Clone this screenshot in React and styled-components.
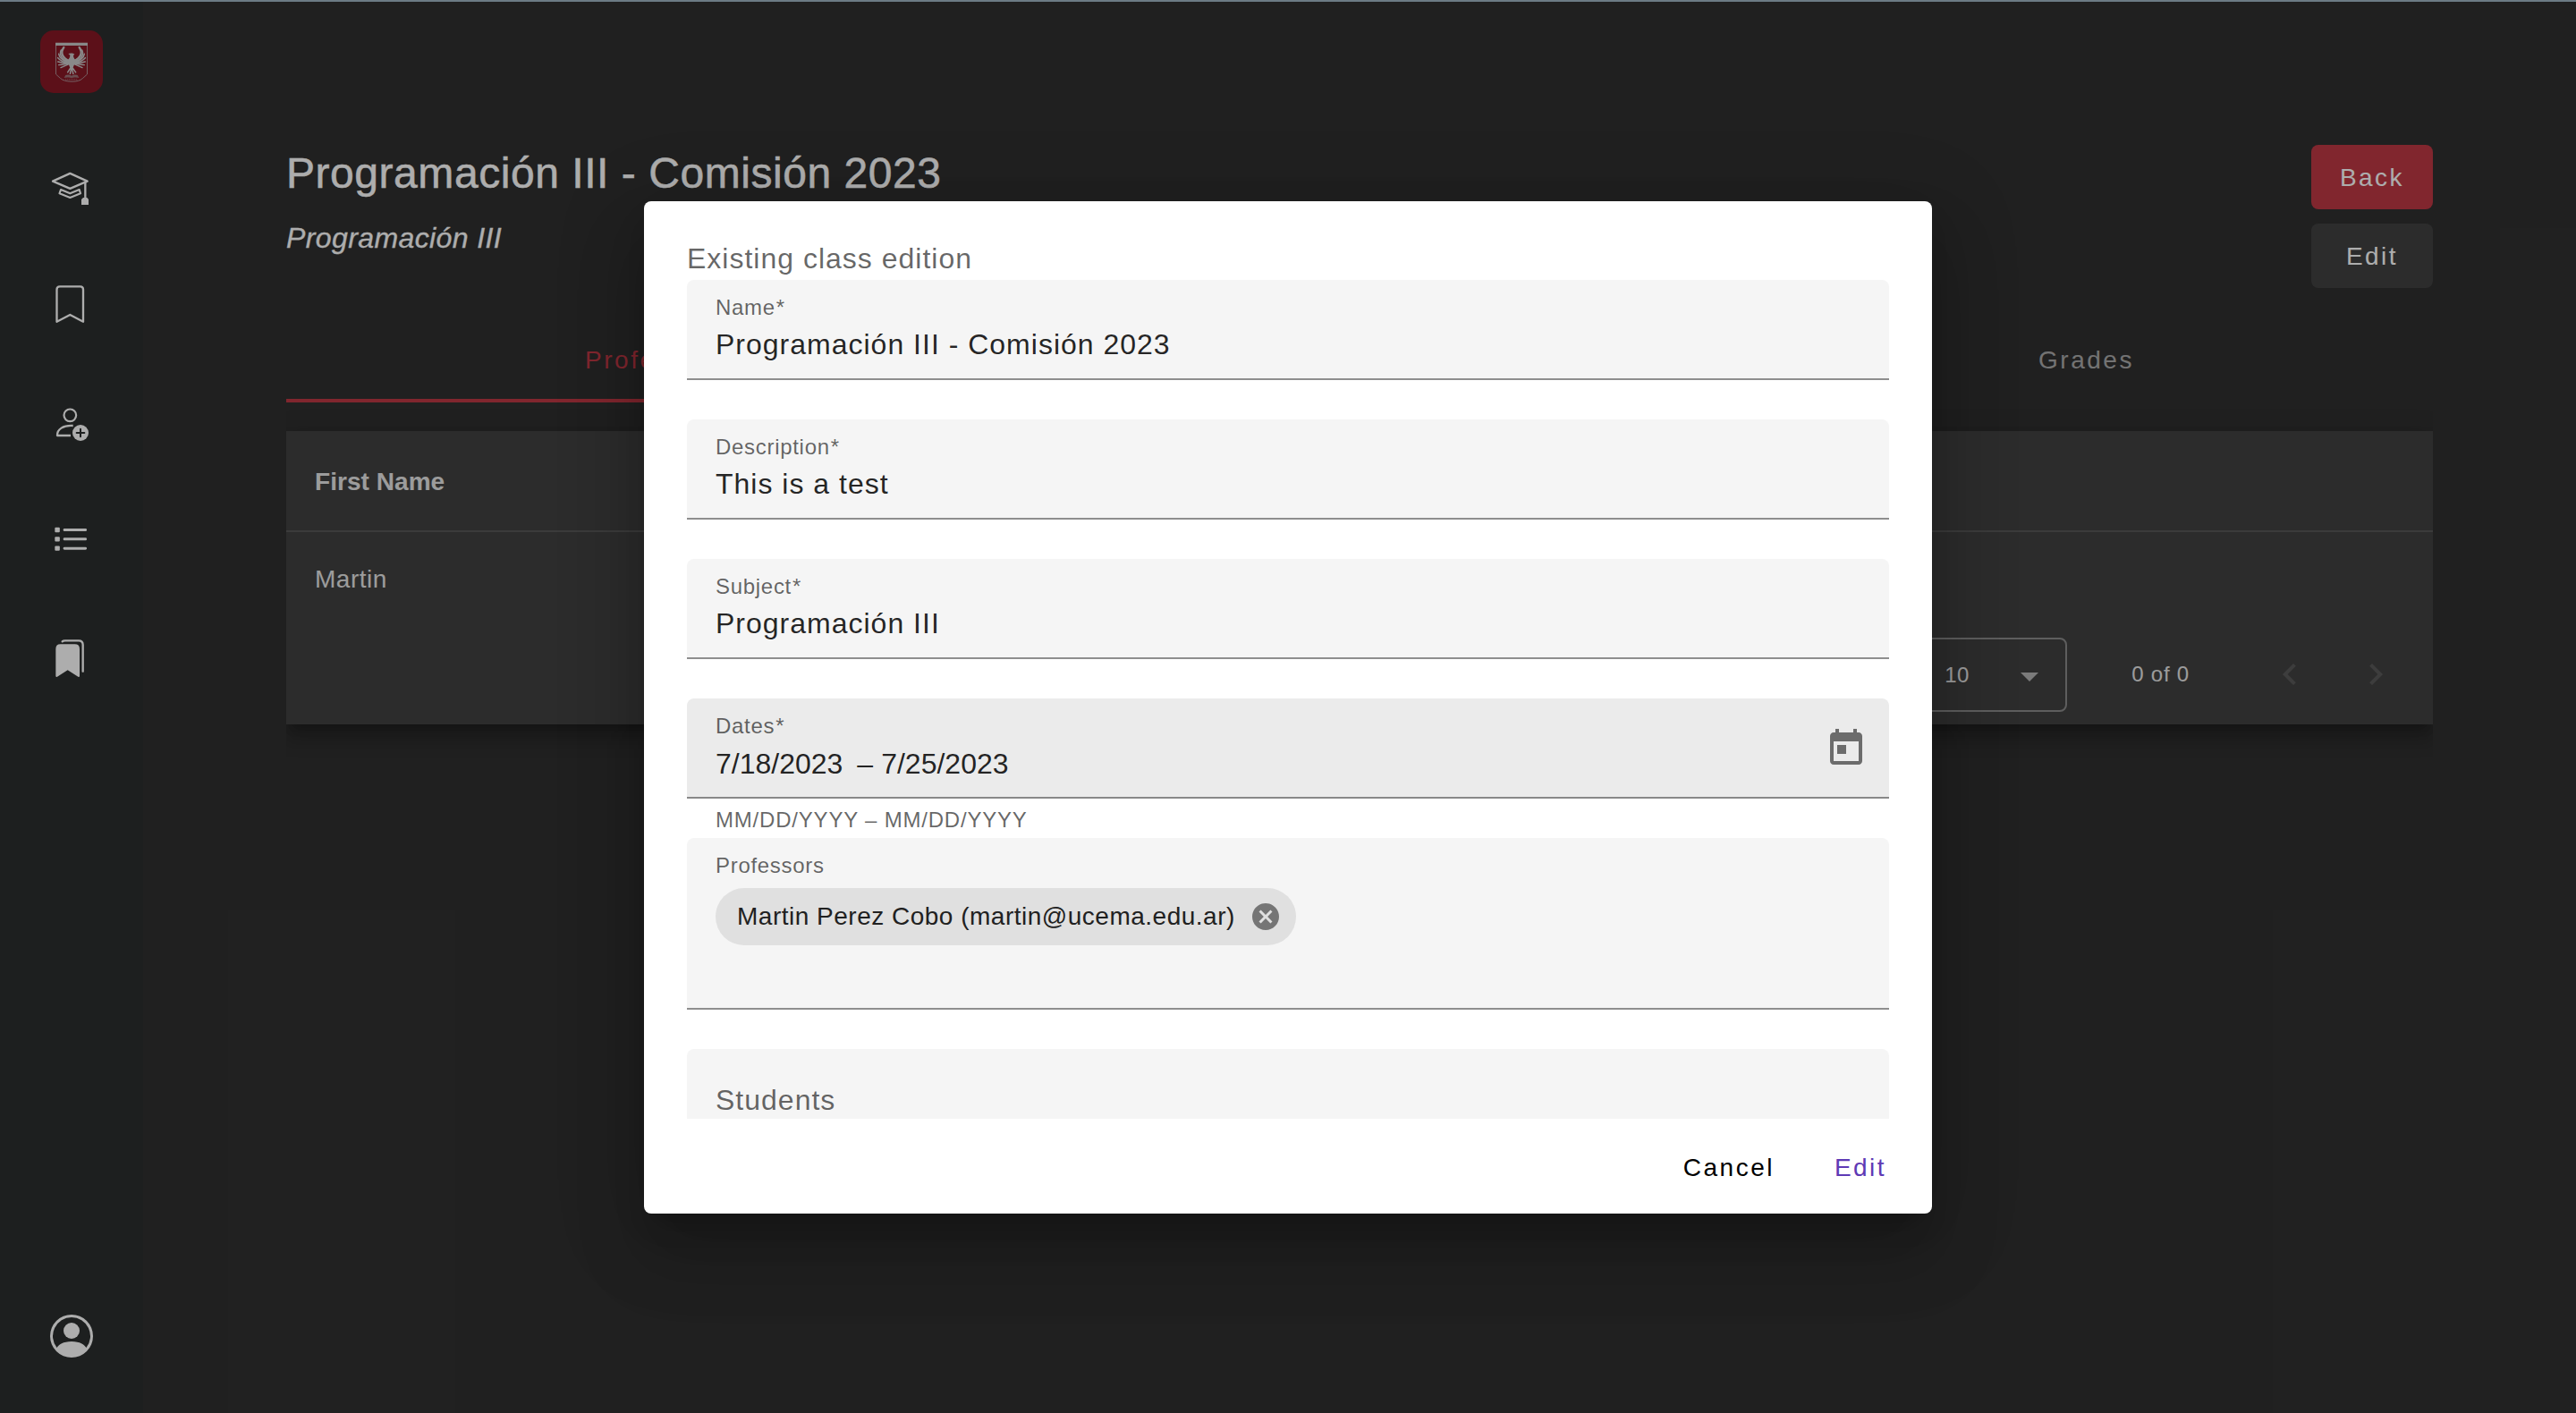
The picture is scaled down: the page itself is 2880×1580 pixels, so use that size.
import React from "react";
import styled, { createGlobalStyle } from "styled-components";
import { BsPersonCircle } from "react-icons/bs";

const Global = createGlobalStyle`
  *, *::before, *::after { box-sizing: border-box; }
  body {
    margin: 0;
    background: #303030;
    font-family: "Liberation Sans", Arial, sans-serif;
    color: #fff;
    overflow: hidden;
  }
`;

const Shell = styled.div`
  position: relative;
  display: flex;
  width: 2880px;
  height: 1580px;
  overflow: hidden;
`;

const Sidebar = styled.nav`
  width: 160px;
  padding: 34px 0 60px;
  background: #2c2f2e;
  display: flex;
  flex-direction: column;
  align-items: center;
`;

const Logo = styled.div`
  width: 70px;
  height: 70px;
  border-radius: 15px;
  background: #881826;
  overflow: hidden;
  svg { display: block; }
`;

const NavList = styled.div`
  display: flex;
  flex-direction: column;
  align-items: center;
  gap: 86px;
  margin-top: 82px;
  flex: 1;
`;

const NavItem = styled.div`
  width: 48px;
  height: 48px;
  svg { display: block; overflow: visible; }
`;

const ProfileItem = styled.div`
  height: 50px;
  padding-top: 0;
  color: #fff;
  svg { display: block; }
`;

const Main = styled.main`
  flex: 1;
  padding: 162px 160px 0;
`;

const Header = styled.header`
  display: flex;
  justify-content: space-between;
  height: 192px;
`;

const Title = styled.h1`
  margin: 0;
  font-size: 48px;
  line-height: 64px;
  font-weight: 400;
  letter-spacing: 0.55px;
  -webkit-text-stroke: 0.5px currentColor;
`;

const Subtitle = styled.div`
  margin-top: 20px;
  font-size: 32px;
  line-height: 41px;
  font-style: italic;
  letter-spacing: 0.4px;
  -webkit-text-stroke: 0.3px currentColor;
`;

const HeaderActions = styled.div`
  display: flex;
  flex-direction: column;
  gap: 16px;
`;

const RaisedButton = styled.button`
  width: 136px;
  height: 72px;
  padding: 0;
  border: 0;
  border-radius: 8px;
  background: ${(p) => (p.$primary ? "#be3845" : "#424242")};
  color: #fff;
  font-family: inherit;
  font-size: 28px;
  line-height: 74px;
  letter-spacing: 2.5px;
`;

const Tabs = styled.div`
  display: flex;
  height: 96px;
`;

const Tab = styled.div`
  width: ${(p) => p.$width}px;
  text-align: center;
  font-size: 28px;
  line-height: 98px;
  height: 96px;
  letter-spacing: 2.5px;
  color: ${(p) => (p.$active ? "#be3845" : "rgba(255,255,255,0.6)")};
  box-shadow: ${(p) => (p.$active ? "inset 0 -4px 0 #be3845" : "none")};
`;

const TableCard = styled.section`
  margin-top: 32px;
  height: 328px;
  background: #424242;
  box-shadow: 0 10px 10px -6px rgba(0, 0, 0, 0.2),
    0 16px 20px 2px rgba(0, 0, 0, 0.14), 0 6px 28px 4px rgba(0, 0, 0, 0.12);
  clip-path: inset(-80px 0 -80px 0);
`;

const HeadRow = styled.div`
  height: 113px;
  padding: 0 32px;
  line-height: 114px;
  border-bottom: 2px solid #585858;
  font-size: 28px;
  font-weight: 700;
  letter-spacing: 0.05px;
  color: #e6e6e6;
`;

const BodyRow = styled.div`
  height: 103px;
  padding: 0 32px;
  line-height: 106px;
  font-size: 28px;
  letter-spacing: 0.5px;
  color: #e6e6e6;
`;

const Paginator = styled.div`
  height: 112px;
  padding-right: 16px;
  display: flex;
  align-items: center;
  justify-content: flex-end;
  font-size: 24px;
  letter-spacing: 0.8px;
  color: #e6e6e6;
`;

const PageSize = styled.div`
  width: 168px;
  height: 83px;
  margin-top: 1px;
  border: 2px solid #8b8b8b;
  border-radius: 8px;
  padding: 1px 30px 0 29px;
  display: flex;
  align-items: center;
  justify-content: space-between;
  letter-spacing: 0.4px;
`;

const Caret = styled.span`
  border: 10px solid transparent;
  border-top-color: #b5b5b5;
  border-bottom: 0;
  margin-top: 4px;
`;

const RangeLabel = styled.div`
  margin: 0 64px 0 72px;
`;

const PageButton = styled.div`
  width: 96px;
  height: 96px;
  display: grid;
  place-items: center;
  svg { display: block; }
`;

const Backdrop = styled.div`
  position: absolute;
  inset: 0;
  background: rgba(0, 0, 0, 0.32);
  display: flex;
  justify-content: center;
  align-items: flex-start;
  padding-top: 225px;
`;

const TopEdge = styled.div`
  position: absolute;
  left: 0;
  right: 0;
  top: 0;
  height: 2px;
  background: #6c7b85;
`;

const Dialog = styled.div`
  width: 1440px;
  height: 1132px;
  border-radius: 8px;
  background: #fff;
  display: flex;
  flex-direction: column;
  box-shadow: 0 22px 30px -14px rgba(0, 0, 0, 0.2),
    0 48px 76px 6px rgba(0, 0, 0, 0.14), 0 18px 92px 16px rgba(0, 0, 0, 0.12);
`;

const DialogBody = styled.div`
  height: 1026px;
  padding: 40px 48px 0;
  overflow: hidden;
`;

const DialogTitle = styled.div`
  height: 48px;
  line-height: 48px;
  font-size: 32px;
  letter-spacing: 1px;
  color: rgba(0, 0, 0, 0.6);
`;

const Field = styled.div`
  position: relative;
  height: ${(p) => p.$height || 112}px;
  margin-bottom: ${(p) => (p.$tight ? 0 : 44)}px;
  padding: 19px 32px 0;
  border-radius: 8px 8px 0 0;
  border-bottom: 2px solid ${(p) => (p.$hover ? "#888" : "#8e8e8e")};
  background: ${(p) => (p.$hover ? "#ebebeb" : "#f5f5f5")};
`;

const Label = styled.div`
  height: 24px;
  line-height: 24px;
  font-size: 24px;
  letter-spacing: 0.7px;
  color: rgba(0, 0, 0, 0.6);
  span { margin-left: 1px; }
`;

const Value = styled.div`
  margin-top: 9px;
  height: 40px;
  line-height: 40px;
  font-size: 32px;
  letter-spacing: 1px;
  color: rgba(0, 0, 0, 0.87);
`;

const DateRow = styled.div`
  display: flex;
  justify-content: space-between;
`;

const DateRange = styled(Value)`
  margin-top: 10px;
  letter-spacing: 0;
  white-space: pre;
  display: flex;
`;

const Dash = styled.span`
  margin: 0 9px 0 16px;
`;

const DateFields = styled.div``;

const CalendarButton = styled.div`
  margin-right: -8px;
  padding-top: 13px;
  svg { display: block; }
`;

const Hint = styled.div`
  height: 44px;
  padding: 2px 32px 0;
  line-height: 43px;
  font-size: 24px;
  letter-spacing: 0.8px;
  color: rgba(0, 0, 0, 0.6);
`;

const Chip = styled.div`
  width: 649px;
  height: 64px;
  margin-top: 13px;
  padding: 0 16px 0 24px;
  border-radius: 32px;
  background: #e0e0e0;
  display: flex;
  align-items: center;
  justify-content: space-between;
  font-size: 28px;
  line-height: 66px;
  letter-spacing: 0.5px;
  white-space: nowrap;
  color: #212121;
  svg { display: block; }
`;

const Placeholder = styled.div`
  margin-top: 18px;
  height: 40px;
  line-height: 40px;
  font-size: 32px;
  letter-spacing: 1px;
  color: rgba(0, 0, 0, 0.6);
`;

const DialogActions = styled.div`
  flex: 1;
  padding: 3px 16px 0;
  display: flex;
  align-items: center;
  justify-content: flex-end;
  gap: 16px;
`;

const TextButton = styled.button`
  min-width: 128px;
  height: 72px;
  padding: 1px 16px 0;
  border: 0;
  background: transparent;
  font-family: inherit;
  font-size: 28px;
  letter-spacing: 2.5px;
  color: ${(p) => (p.$accent ? "#5e3ab5" : "#000")};
`;

const feathers = [
  ["M214 158C201 176 209 192 233 205", 7],
  ["M205 167C197 185 209 199 232 208", 5],
  ["M197 180C199 193 212 203 231 210", 4.5],
  ["M194 193C202 202 214 208 231 211", 4.5],
  ["M194 206C204 209 216 211 231 212", 4],
  ["M197 217C208 216 219 214 232 212", 4],
  ["M204 226C213 222 222 218 233 213", 4],
];

const Wing = ({ transform }) => (
  <g stroke="#cbcbcb" strokeLinecap="round" transform={transform}>
    {feathers.map(([d, w]) => (
      <path key={d} d={d} strokeWidth={w} />
    ))}
  </g>
);

const Crest = () => (
  <svg width="70" height="70" viewBox="135 101 210 210" fill="none">
    <path d="M187.500 145V248L203 262Q214 272 240 272.500T277 262L292.500 248V145" stroke="#b4a0a3" strokeWidth="2.600" />
    <path d="M186 142H294V152H186Z" fill="#c9c9c9" />
    <Wing />
    <Wing transform="translate(480 0) scale(-1 1)" />
    <path d="M229 179C236 176 246 177 250 181L246 185C246 191 249 196 253 200C251 212 247 222 243 230H237C232 222 229 211 227 200C232 196 235 191 235 184Z" fill="#cbcbcb" />
    <path d="M237 226L226 243M239 228L235 248M241 228L246 248M243 226L255 243" stroke="#cbcbcb" strokeWidth="4.500" />
    <path d="M220 251Q230 247 240 253Q250 247 260 251L265 260Q250 256 240 261Q230 256 215 260Z" fill="#9c7277" />
    <path d="M219 265.500H261" stroke="#a87c82" strokeWidth="2.500" strokeDasharray="4 2" />
  </svg>
);

/* The navigation icons share a drawing grid of three units per pixel. */
const NavIcon = ({ box, children }) => (
  <svg width="48" height="48" viewBox={box} fill="none" stroke="#fff">
    {children}
  </svg>
);

const CapIcon = () => (
  <NavIcon box="168 558 144 144">
    <path d="M177 608L235 581.500L293 608L235 632.500Z" strokeWidth="7" strokeLinejoin="round" />
    <path d="M204 636L235 649L266 636L270 649L235 663L199.500 649Z" strokeWidth="6.500" strokeLinejoin="round" />
    <path d="M286 610V668" strokeWidth="7" />
    <path d="M279 663H292L297 669V687H273V669Z" fill="#fff" stroke="none" />
  </NavIcon>
);

const BookmarkIcon = () => (
  <NavIcon box="168 960 144 144">
    <path d="M190.500 1079V971Q190.500 961 200.500 961H269Q279 961 279 971V1079L235 1056Z" strokeWidth="7" strokeLinejoin="round" />
  </NavIcon>
);

const AddUserIcon = () => (
  <NavIcon box="168 162 144 144">
    <circle cx="235" cy="193" r="20.500" strokeWidth="6.500" />
    <path d="M245 228C212 226 191 240 192 261H237" strokeWidth="7" strokeLinejoin="round" />
    <circle cx="270" cy="252" r="27" fill="#fff" stroke="none" />
    <path d="M270 239V265M257 252H283" stroke="#2c2f2e" strokeWidth="6" strokeLinecap="round" />
  </NavIcon>
);

const ListIcon = () => (
  <NavIcon box="168 564 144 144">
    {[577.5, 608.5, 639.5].map((y) => (
      <g key={y}>
        <rect x="184" y={y - 8} width="16.500" height="16" rx="3" fill="#fff" stroke="none" />
        <rect x="212" y={y - 4.5} width="79" height="9" rx="4" fill="#fff" stroke="none" />
      </g>
    ))}
  </NavIcon>
);

const StackIcon = () => (
  <NavIcon box="168 966 144 144">
    <path d="M187 1068V977Q187 961 203 961H251Q267 961 267 977V1068Q266 1072 262 1070L227 1048L192 1070Q188 1072 187 1068Z" fill="#fff" stroke="none" />
    <path d="M209 952Q212 949 218 949H264Q278 949 278 963V1052" strokeWidth="7" strokeLinecap="round" />
  </NavIcon>
);

const navIcons = [CapIcon, BookmarkIcon, AddUserIcon, ListIcon, StackIcon];

const textFields = [
  { label: "Name", value: "Programación III - Comisión 2023" },
  { label: "Description", value: "This is a test" },
  { label: "Subject", value: "Programación III" },
];

export default function App() {
  return (
    <Shell>
      <Global />
      <Sidebar>
        <Logo><Crest /></Logo>
        <NavList>
          {navIcons.map((Icon, i) => (
            <NavItem key={i}><Icon /></NavItem>
          ))}
        </NavList>
        <ProfileItem><BsPersonCircle size={48} /></ProfileItem>
      </Sidebar>

      <Main>
        <Header>
          <div>
            <Title>Programación III - Comisión 2023</Title>
            <Subtitle>Programación III</Subtitle>
          </div>
          <HeaderActions>
            <RaisedButton $primary>Back</RaisedButton>
            <RaisedButton>Edit</RaisedButton>
          </HeaderActions>
        </Header>
        <Tabs>
          <Tab $active $width={827}>Professors</Tab>
          <Tab $width={798} />
          <Tab $width={775}>Grades</Tab>
        </Tabs>
        <TableCard>
          <HeadRow>First Name</HeadRow>
          <BodyRow>Martin</BodyRow>
          <Paginator>
            <PageSize>10<Caret /></PageSize>
            <RangeLabel>0 of 0</RangeLabel>
            <PageButton>
              <svg width="48" height="48" viewBox="0 0 24 24" fill="#5a5a5a">
                <path d="M15.410 7.410L14 6l-6 6 6 6 1.410-1.410L10.830 12z" />
              </svg>
            </PageButton>
            <PageButton>
              <svg width="48" height="48" viewBox="0 0 24 24" fill="#5a5a5a">
                <path d="M10 6L8.590 7.410 13.170 12l-4.580 4.590L10 18l6-6z" />
              </svg>
            </PageButton>
          </Paginator>
        </TableCard>
      </Main>

      <Backdrop>
        <Dialog>
          <DialogBody>
            <DialogTitle>Existing class edition</DialogTitle>
            {textFields.map((f) => (
              <Field key={f.label}>
                <Label>{f.label}<span>*</span></Label>
                <Value>{f.value}</Value>
              </Field>
            ))}
            <Field $hover $tight>
              <DateRow>
                <DateFields>
                  <Label>Dates<span>*</span></Label>
                  <DateRange>7/18/2023<Dash>–</Dash>7/25/2023</DateRange>
                </DateFields>
                <CalendarButton>
                  <svg width="48" height="48" viewBox="0 0 24 24" fill="#6c6c6c">
                    <path d="M19 3h-1V1h-2v2H8V1H6v2H5c-1.110 0-1.990.9-1.990 2L3 19c0 1.100.890 2 2 2h14c1.100 0 2-.9 2-2V5c0-1.100-.9-2-2-2zm0 16H5V8h14v11zM7 10h5v5H7z" />
                  </svg>
                </CalendarButton>
              </DateRow>
            </Field>
            <Hint>MM/DD/YYYY – MM/DD/YYYY</Hint>
            <Field $height={192}>
              <Label>Professors</Label>
              <Chip>
                Martin Perez Cobo (martin@ucema.edu.ar)
                <svg width="36" height="36" viewBox="0 0 24 24" fill="#757575">
                  <path d="M12 2C6.470 2 2 6.470 2 12s4.470 10 10 10 10-4.470 10-10S17.530 2 12 2zm5 13.590L15.590 17 12 13.410 8.410 17 7 15.590 10.590 12 7 8.410 8.410 7 12 10.590 15.590 7 17 8.410 13.410 12 17 15.590z" />
                </svg>
              </Chip>
            </Field>
            <Field $height={192}>
              <Placeholder>Students</Placeholder>
            </Field>
          </DialogBody>
          <DialogActions>
            <TextButton>Cancel</TextButton>
            <TextButton $accent>Edit</TextButton>
          </DialogActions>
        </Dialog>
      </Backdrop>
      <TopEdge />
    </Shell>
  );
}
